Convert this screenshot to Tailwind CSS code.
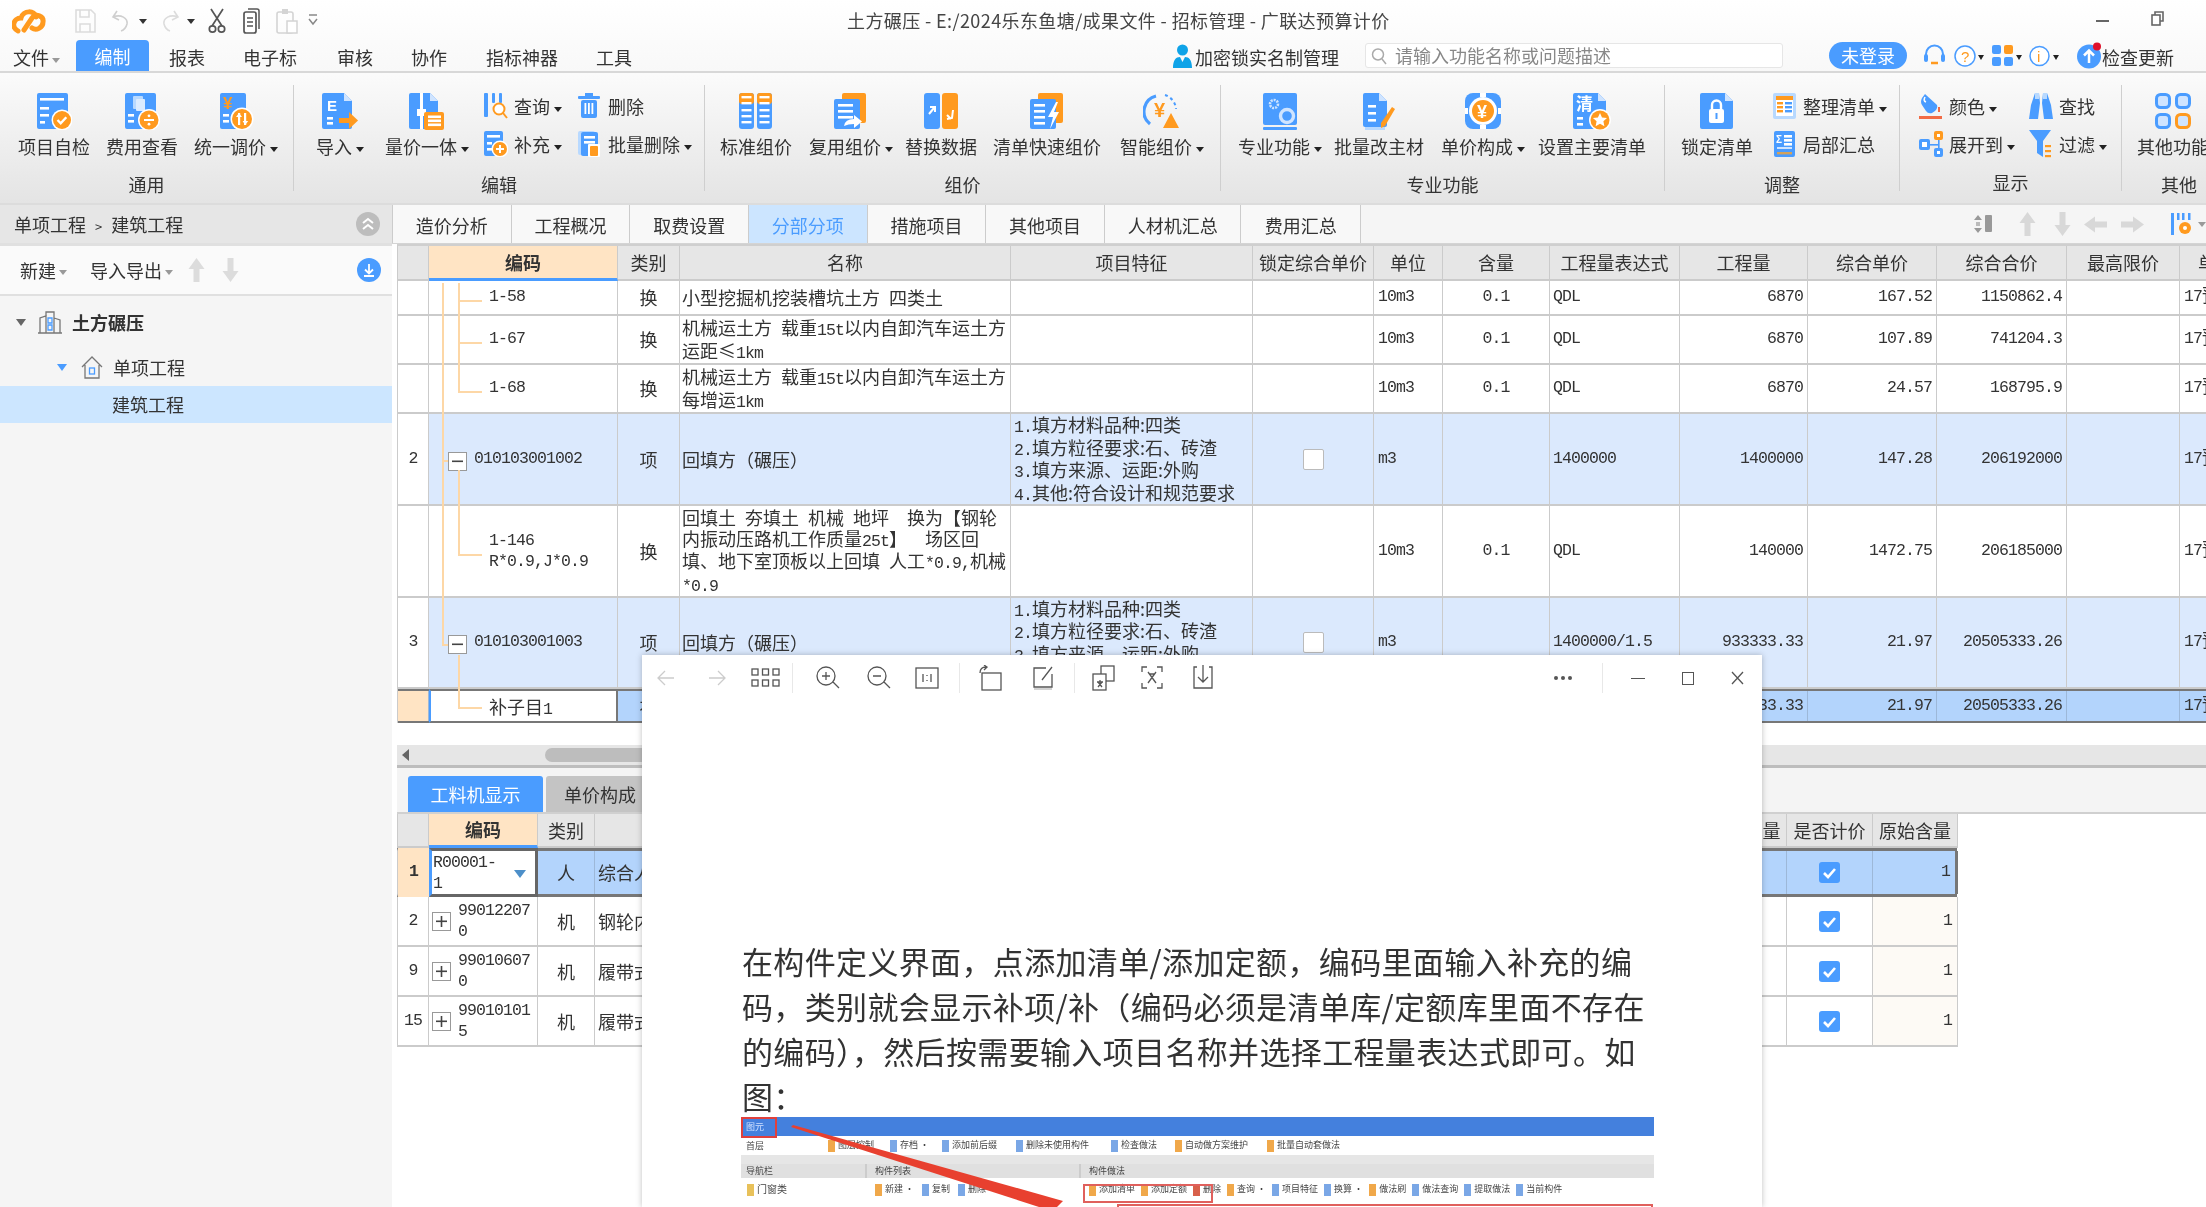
<!DOCTYPE html>
<html lang="zh-CN">
<head>
<meta charset="utf-8">
<title>广联达预算计价</title>
<script src="https://cdn.jsdelivr.net/npm/@tailwindcss/browser@4"></script>
</head>
<body class="bg-white">
<div id="app" class="relative w-[2206px] h-[1207px] overflow-hidden bg-white text-[18px] text-[#333] [font-family:'Noto_Sans_CJK_SC','Liberation_Sans',sans-serif] blur-[0.4px]"></div>
<script>
const BLUE = '#4a9cff', ORG = '#ff9a1f', LT = '#b8d9ff';
const svg = (w, h, body) => `<svg width="${w}" height="${h}" viewBox="0 0 ${w} ${h}" class="block shrink-0">${body}</svg>`;
const r = (x, y, w, h, f = '#fff', rx = 0) => `<rect x="${x}" y="${y}" width="${w}" height="${h}" fill="${f}" rx="${rx}"/>`;
const badge = (cx, cy, rad, inner) => `<circle cx="${cx}" cy="${cy}" r="${rad + 1.5}" fill="#fff"/><circle cx="${cx}" cy="${cy}" r="${rad}" fill="${ORG}"/>${inner}`;
const docPath = (w, h, f = BLUE) => `<path d="M2 0H${w - 8}L${w} 8V${h - 2}Q${w} ${h} ${w - 2} ${h}H2Q0 ${h} 0 ${h - 2}V2Q0 0 2 0Z" fill="${f}"/><path d="M${w - 8} 0V8H${w}Z" fill="#cfe4ff"/>`;
const txt = (x, y, s, t, f = '#fff', w = 700) => `<text x="${x}" y="${y}" font-size="${s}" fill="${f}" font-weight="${w}" font-family="Liberation Sans, Noto Sans CJK SC, sans-serif">${t}</text>`;
const lines = (x, ys, w) => ys.map(y => r(x, y, w, 2.6)).join('');

const icons = {
  xmzj: svg(36, 37, r(1, 0, 31, 36, BLUE, 2) + lines(4, [5], 24) + lines(4, [14, 21], 9) + lines(4, [28], 5) + badge(26, 27, 9, `<path d="M21.5 27l3.2 3.3 5.6-6" stroke="#fff" stroke-width="2.4" fill="none"/>`)),
  fyck: svg(36, 37, r(1, 0, 31, 36, BLUE, 2) + r(9, 3, 10, 13, LT, 1) + r(12, 6, 9, 12, '#dcecff', 1) + lines(4, [21, 27], 6) + badge(25, 27, 9.5, r(20, 26, 10, 2) + `<circle cx="25" cy="22.8" r="1.4" fill="#fff"/><circle cx="25" cy="31.2" r="1.4" fill="#fff"/>`)),
  tytj: svg(36, 37, r(2, 0, 26, 36, BLUE, 2) + txt(5, 16, 17, '¥', ORG, 900) + lines(5, [21, 27], 6) + badge(24, 26, 10, r(20, 20, 2.2, 12) + r(26, 20, 2.2, 12) + `<path d="M18 24l3-4 3 4zM24.6 28l2.6 4 3-4z" fill="#fff"/>`)),
  dr: svg(36, 37, docPath(30, 36) + txt(5, 18, 15, 'E') + lines(5, [24, 29], 6) + r(17, 25, 11, 5, ORG) + `<path d="M27 19l9 8.5-9 8.5z" fill="${ORG}"/>`),
  ljyt: svg(36, 37, docPath(29, 36) + r(11, 0, 3, 36, '#fff') + r(8, 16, 9, 7, '#fff') + r(15, 19, 20, 18, ORG, 2) + lines(19, [22.5, 26.5, 30.5], 13)),
  bzzj: svg(34, 37, r(0, 0, 15, 36, BLUE, 3) + r(18, 0, 15, 36, BLUE, 3) + r(0, 0, 15, 11, ORG, 3) + r(18, 0, 15, 11, ORG, 3) + [3, 9, 16, 22, 28].map(y => r(2.5, y, 10, 2.4) + r(20.5, y, 10, 2.4)).join('')),
  fyzj: svg(34, 37, r(8, 0, 24, 30, ORG, 2) + r(0, 6, 26, 30, BLUE, 2) + lines(4, [11, 17, 23], 15) + `<path d="M10 33q1-7 10-7v-4l8 6.5-8 6.5v-4q-6 0-10 2z" fill="#fff"/>`),
  thsj: svg(34, 37, r(0, 0, 16, 36, BLUE, 3) + r(18, 0, 16, 36, ORG, 3) + `<path d="M5 21l5-6M6 14h5v5M29 17l-1 8-5 1M23 22l4 4" stroke="#fff" stroke-width="2" fill="none"/>`),
  qdks: svg(34, 37, r(8, 0, 25, 30, ORG, 2) + r(0, 6, 26, 30, BLUE, 2) + lines(4, [11, 17, 23, 29], 11) + `<path d="M26 9l-8 15h5l-3 12 9-17h-5l4-10z" fill="#fff"/>`),
  znzj: svg(38, 37, `<path d="M13 3A16 16 0 0 0 7 31" stroke="${BLUE}" stroke-width="3.2" fill="none"/><path d="M22 2A16 16 0 0 1 33 16" stroke="${BLUE}" stroke-width="2" stroke-dasharray="3 3" fill="none"/>` + txt(11, 24, 20, '¥', ORG, 900) + `<path d="M28 20l8 15H20z" fill="${ORG}"/>`),
  zygn: svg(34, 37, r(0, 0, 34, 32, BLUE, 2) + r(0, 34, 34, 3, BLUE, 1) + `<circle cx="11" cy="11" r="4" fill="none" stroke="#cfe4ff" stroke-width="2.6" stroke-dasharray="2 1"/><circle cx="24" cy="23" r="6.5" fill="none" stroke="#cfe4ff" stroke-width="3.4"/>`),
  plgz: svg(32, 37, r(2, 32, 20, 5, LT) + docPath(24, 34) + lines(5, [12, 19, 26], 8) + `<path d="M29 14l3 2-10 17-4 2 0-5z" fill="${ORG}"/>`),
  djgc: svg(36, 37, r(0, 0, 36, 36, BLUE, 8) + `<circle cx="18" cy="18" r="14" fill="#fff"/><circle cx="18" cy="18" r="11" fill="${ORG}"/>` + txt(12, 25, 18, '¥', '#fff', 900) + r(15, 0, 6, 4, '#fff') + r(15, 32, 6, 4, '#fff') + r(0, 15, 3, 6, '#fff') + r(33, 15, 3, 6, '#fff')),
  szzy: svg(38, 37, docPath(33, 36) + txt(3, 17, 17, '清') + lines(4, [24, 30], 6) + badge(27, 27, 9.5, `<path d="M27 20l2 4.5 5 .5-3.6 3.3 1 5-4.4-2.6-4.4 2.6 1-5L19.9 25l5-.5z" fill="#fff"/>`)),
  sdqd: svg(34, 37, docPath(33, 36) + r(9, 16, 15, 14, '#fff', 2) + `<path d="M12 16v-4a4.5 4.5 0 0 1 9 0v4" stroke="#fff" stroke-width="2.4" fill="none"/>` + r(15.5, 20, 2, 6, BLUE)),
  qt: svg(36, 37, [[0, 0, BLUE], [20, 0, BLUE], [0, 20, BLUE], [20, 20, ORG]].map(([x, y, c]) => `<rect x="${x + 1.5}" y="${y + 1.5}" width="13" height="13" rx="4" fill="#cfe4ff" stroke="${c}" stroke-width="3"/>`).join('')),
  cx: svg(24, 26, r(0, 0, 4, 24, BLUE, 1) + r(8, 0, 3, 10, BLUE, 1) + r(15, 0, 3, 10, BLUE, 1) + `<circle cx="15" cy="16" r="5.5" stroke="${ORG}" stroke-width="2" fill="#fff"/><path d="M19 20l4 5" stroke="${ORG}" stroke-width="2"/>`),
  sc: svg(24, 26, r(0, 3, 22, 3, BLUE, 1) + r(7, 0, 8, 3, BLUE) + r(3, 7, 16, 18, BLUE, 2) + r(6.5, 10, 1.8, 11) + r(10, 10, 1.8, 11) + r(13.5, 10, 1.8, 11)),
  bc: svg(24, 26, r(0, 0, 19, 25, BLUE, 2) + lines(3, [4], 13) + lines(3, [11, 17], 5) + badge(16, 18, 7, r(12, 17, 8, 2) + r(15, 14, 2, 8))),
  plsc: svg(24, 26, r(0, 0, 17, 24, LT, 2) + r(3, 1, 17, 24, BLUE, 2) + lines(6, [5, 10], 11) + r(10, 13, 12, 13, '#fff', 1) + r(12, 15, 8, 10, ORG, 1)),
  zlqd: svg(24, 26, r(0, 0, 23, 26, LT, 2) + r(3, 3, 17, 20, '#fff') + r(3, 3, 17, 4, ORG) + [9, 13, 17].map(y => r(4, y, 6, 2.4, ORG) + r(12, y, 7, 2.4, BLUE)).join('')),
  jbhz: svg(24, 26, r(1, 0, 21, 26, BLUE, 2) + txt(3, 12, 10, 'Σ') + lines(11, [4, 8, 12], 8) + r(4, 16, 15, 2, '#cfe4ff') + r(4, 21, 15, 2.4, '#d4a25a')),
  ys: svg(24, 26, `<path d="M6 1l12 11q1 3-2 6l-3 2q-4 1-6-2L3 12Q1 9 3 5z" fill="${BLUE}"/><path d="M6 4q-2 4 1 5" stroke="#fff" stroke-width="1.6" fill="none"/>` + r(0, 23, 23, 3, '#f26b45') + r(19, 14, 2, 5, '#f26b45')),
  cz: svg(24, 26, `<path d="M6 0h4l1 10-2 16H0l2-14zM18 0h-4l-1 10 2 16h9l-2-14z" fill="${BLUE}"/>` + r(6, 0, 4, 6, LT) + r(14, 0, 4, 6, LT)),
  zk: svg(24, 26, r(0, 8, 11, 11, BLUE, 2) + r(3, 11, 5, 5, '#fff') + r(15, 0, 9, 9, ORG, 2) + r(15, 17, 9, 9, BLUE, 2) + r(18, 3, 3, 3, '#fff') + r(18, 20, 3, 3, '#fff') + r(11, 13, 8, 1.6, BLUE) + r(19, 9, 1.6, 8, BLUE)),
  gl: svg(24, 28, `<path d="M0 0h22L14 11v16l-6-4V11z" fill="${BLUE}"/>` + r(16, 15, 6, 2.2, ORG) + r(16, 20, 6, 2.2, ORG) + r(16, 25, 6, 2.2, ORG)),
};

const CARET = '<span class="inline-block ml-[4px] align-middle border-x-[4px] border-x-transparent border-t-[5px] border-t-[#222]"></span>';
const CARET_GRAY = '<span class="inline-block ml-[3px] align-middle border-x-[4px] border-x-transparent border-t-[5px] border-t-[#999]"></span>';

const big = (ic, label, caret, cls = '') => `<div class="flex flex-col items-center ${cls}"><div class="h-[36px] mb-[5px]">${icons[ic]}</div><div class="h-[24px] leading-[24px] whitespace-nowrap">${label}${caret ? CARET : ''}</div></div>`;
const small = (ic, label, caret) => `<div class="flex items-center h-[24px]"><div class="w-[24px] mr-[6px]">${icons[ic]}</div><span class="whitespace-nowrap leading-[24px]">${label}${caret ? CARET : ''}</span></div>`;
const smallCol = (a, b, cls = '') => `<div class="flex flex-col gap-[14px] mt-[1px] ${cls}">${a}${b}</div>`;
const group = (label, width, pad, inner) => `<div class="${width} ${pad} shrink-0 my-[12px] pt-[8px] border-r border-[#cfcfcf] flex flex-col"><div class="flex h-[65px] items-start">${inner}</div><div class="mt-[14px] h-[24px] leading-[24px] text-center -ml-[var(--pad)]">${label}</div></div>`;

const ribbon = `
<div class="flex h-[132px] bg-gradient-to-b from-[#fbfbfb] to-[#e4e4e4] border-b-2 border-[#dcdcdc] overflow-hidden">
  ${group('通用', 'w-[294px]', 'pl-[18px] [--pad:18px]', big('xmzj', '项目自检') + big('fyck', '费用查看', 0, 'ml-[16px]') + big('tytj', '统一调价', 1, 'ml-[16px]'))}
  ${group('编辑', 'w-[411px]', 'pl-[22px] [--pad:22px]', big('dr', '导入', 1) + big('ljyt', '量价一体', 1, 'ml-[21px]') + smallCol(small('cx', '查询', 1), small('bc', '补充', 1), 'ml-[15px] w-[78px]') + smallCol(small('sc', '删除'), small('plsc', '批量删除', 1), 'ml-[16px]'))}
  ${group('组价', 'w-[516px]', 'pl-[15px] [--pad:15px]', big('bzzj', '标准组价') + big('fyzj', '复用组价', 1, 'ml-[17px]') + big('thsj', '替换数据', 0, 'ml-[12px]') + big('qdks', '清单快速组价', 0, 'ml-[16px]') + big('znzj', '智能组价', 1, 'ml-[19px]'))}
  ${group('专业功能', 'w-[444px]', 'pl-[17px] [--pad:17px]', big('zygn', '专业功能', 1) + big('plgz', '批量改主材', 0, 'ml-[12px]') + big('djgc', '单价构成', 1, 'ml-[17px]') + big('szzy', '设置主要清单', 0, 'ml-[13px]'))}
  ${group('调整', 'w-[235px]', 'pl-[16px] [--pad:16px]', big('sdqd', '锁定清单') + smallCol(small('zlqd', '整理清单', 1), small('jbhz', '局部汇总'), 'ml-[20px]'))}
  ${group('显示', 'w-[222px]', 'pl-[19px] [--pad:19px]', smallCol(small('ys', '颜色', 1), small('zk', '展开到', 1), 'w-[94px]') + smallCol(small('cz', '查找'), small('gl', '过滤', 1), 'ml-[16px]'))}
  <div class="flex-1 my-[12px] pt-[8px] pl-[15px]"><div class="h-[65px] whitespace-nowrap">${big('qt', '其他功能', 0, 'w-[72px]')}</div><div class="mt-[14px] h-[24px] leading-[24px] pl-[24px]">其他</div></div>
</div>`;

const quick = `
<div class="flex items-center h-[42px]">
  <div class="w-[847px] flex items-center shrink-0 pl-[12px]">
    ${svg(34, 26, `<path d="M6 23C-1 20 1 10 9 10 11 2 23 2 24 9M12 22l8-12c4-5 12-2 11 4 0 6-7 9-11 6" stroke="${ORG}" stroke-width="5" fill="none" stroke-linecap="round"/>`)}
    <div class="ml-[28px]">${svg(22, 24, `<path d="M2 1h15l4 4v18H2z M6 1v7h9V1 M6 23v-8h10v8" stroke="#dcdcdc" stroke-width="1.6" fill="none"/>`)}</div>
    <div class="ml-[15px]">${svg(19, 24, `<path d="M6 2L2 8l6 3M2 8c8-3 15 1 14 7-1 4-3 6-6 7" stroke="#cfcfcf" stroke-width="1.6" fill="none"/>`)}</div>
    <span class="ml-[9px] border-x-[4px] border-x-transparent border-t-[5px] border-t-[#333]"></span>
    <div class="ml-[14px]">${svg(19, 24, `<path d="M13 2l4 6-6 3M17 8C9 5 2 9 3 15c1 4 3 6 6 7" stroke="#dcdcdc" stroke-width="1.6" fill="none"/>`)}</div>
    <span class="ml-[7px] border-x-[4px] border-x-transparent border-t-[5px] border-t-[#333]"></span>
    <div class="ml-[13px]">${svg(18, 26, `<path d="M3 1l11 17M15 1L4 18" stroke="#555" stroke-width="1.7"/><circle cx="4.5" cy="21" r="3.2" stroke="#555" stroke-width="1.7" fill="none"/><circle cx="13.5" cy="21" r="3.2" stroke="#555" stroke-width="1.7" fill="none"/>`)}</div>
    <div class="ml-[17px]">${svg(17, 26, `<rect x="1" y="4" width="12" height="21" rx="2" stroke="#555" stroke-width="1.7" fill="#fff"/><path d="M5 1h9q2 0 2 2v18" stroke="#555" stroke-width="1.5" fill="none"/><path d="M4 10h6M4 14h6M4 18h6" stroke="#555" stroke-width="1.4"/>`)}</div>
    <div class="ml-[16px]">${svg(22, 26, `<rect x="1" y="4" width="16" height="21" rx="2" stroke="#d4d4d4" stroke-width="1.6" fill="none"/><rect x="6" y="1" width="6" height="5" fill="#d4d4d4"/><rect x="11" y="13" width="10" height="12" stroke="#d4d4d4" stroke-width="1.5" fill="#fff"/>`)}</div>
    <div class="ml-[10px]">${svg(10, 14, `<path d="M1 1h8" stroke="#888" stroke-width="1.5"/><path d="M1 5l4 5 4-5" stroke="#888" stroke-width="1.5" fill="none"/>`)}</div>
  </div>
  <div class="whitespace-nowrap leading-[24px] text-[#444] -mt-[2px] tracking-[0.4px]">土方碾压 - E:/2024乐东鱼塘/成果文件 - 招标管理 - 广联达预算计价</div>
  <div class="ml-[706px] w-[13px] h-[2px] bg-[#666]"></div>
  <div class="ml-[42px] -mt-[6px]">${svg(13, 15, `<rect x="1" y="4" width="8" height="10" stroke="#666" stroke-width="1.6" fill="#fff"/><path d="M4 4V1h8v9H9" stroke="#666" stroke-width="1.6" fill="none"/>`)}</div>
</div>`;

const menu = `
<div class="flex items-end h-[31px] border-b-2 border-[#d8d8d8] whitespace-nowrap">
  <div class="ml-[13px] mb-[1px] leading-[26px] text-[18px]">文件${CARET_GRAY}</div>
  <div class="ml-[16px] w-[73px] h-[31px] leading-[32px] text-center text-white bg-[#4a9cff] rounded-t-[4px]">编制</div>
  <div class="ml-[20px] mb-[1px] leading-[26px]">报表</div>
  <div class="ml-[38px] mb-[1px] leading-[26px]">电子标</div>
  <div class="ml-[40px] mb-[1px] leading-[26px]">审核</div>
  <div class="ml-[38px] mb-[1px] leading-[26px]">协作</div>
  <div class="ml-[39px] mb-[1px] leading-[26px]">指标神器</div>
  <div class="ml-[38px] mb-[1px] leading-[26px]">工具</div>
  <div class="ml-[541px] mb-[3px]">${svg(19, 24, `<circle cx="9.5" cy="6" r="5.5" fill="#0fa3e8"/><path d="M0 24c0-8 3-11 7-11l2.5 5 2.5-5c4 0 7 3 7 11z" fill="#0fa3e8"/>`)}</div>
  <div class="ml-[3px] mb-[1px] leading-[26px]">加密锁实名制管理</div>
  <div class="ml-[26px] mb-[3px] w-[418px] h-[25px] bg-white border border-[#e6e6e6] rounded-[3px] flex items-center pl-[5px] text-[#888]">
    ${svg(16, 18, `<circle cx="7" cy="7.5" r="5.5" stroke="#aaa" stroke-width="1.5" fill="none"/><path d="M11 12l4 5" stroke="#aaa" stroke-width="1.5"/>`)}
    <span class="ml-[8px] leading-[25px]">请输入功能名称或问题描述</span>
  </div>
  <div class="ml-[46px] mb-[2px] w-[78px] h-[27px] rounded-full bg-[#4a9cff] text-white text-center leading-[27px]">未登录</div>
  <div class="ml-[16px] mb-[3px]">${svg(23, 24, `<path d="M3 13V10a8.5 8.5 0 0 1 17 0v3" stroke="${BLUE}" stroke-width="2" fill="none"/><rect x="1" y="10" width="4" height="8" rx="2" fill="${BLUE}"/><rect x="18" y="10" width="4" height="8" rx="2" fill="${BLUE}"/><path d="M8 19h7" stroke="${ORG}" stroke-width="2.5"/>`)}</div>
  <div class="ml-[8px] mb-[3px]">${svg(22, 24, `<circle cx="11" cy="12" r="10" stroke="${BLUE}" stroke-width="1.5" fill="#fff"/>` + txt(7, 18, 15, '?', ORG, 400))}</div>
  <span class="ml-[2px] mb-[11px] border-x-[3.5px] border-x-transparent border-t-[5px] border-t-[#222]"></span>
  <div class="ml-[8px] mb-[3px]">${svg(22, 24, r(0, 1, 9, 9, BLUE, 2) + r(12, 1, 9, 9, ORG, 2) + r(0, 13, 9, 9, BLUE, 2) + r(12, 13, 9, 9, BLUE, 2))}</div>
  <span class="ml-[2px] mb-[11px] border-x-[3.5px] border-x-transparent border-t-[5px] border-t-[#222]"></span>
  <div class="ml-[7px] mb-[3px]">${svg(21, 24, `<circle cx="10.5" cy="12" r="9.5" stroke="${BLUE}" stroke-width="1.5" fill="#fff"/>` + txt(8, 18, 15, 'i', ORG, 400))}</div>
  <span class="ml-[3px] mb-[11px] border-x-[3.5px] border-x-transparent border-t-[5px] border-t-[#222]"></span>
  <div class="ml-[18px] mb-[2px]">${svg(25, 27, `<circle cx="12" cy="14.5" r="12" fill="${BLUE}"/><path d="M12 21v-12M7 13.5l5-5 5 5" stroke="#fff" stroke-width="2.5" fill="none"/><circle cx="20" cy="4.500" r="4" fill="#e0112b"/>`)}</div>
  <div class="mb-[1px] leading-[26px]">检查更新</div>
</div>`;

const leftPanel = `
<div class="w-[392px] shrink-0 h-full bg-[#f5f5f5] flex flex-col">
  <div class="h-[41px] bg-[#e6e6e6] flex items-center pl-[14px] border-b-[3px] border-[#e0e0e0]">
    <span class="flex-1">单项工程&ensp;<span class="text-[13px]">&gt;</span>&ensp;建筑工程</span>
    <div class="mr-[12px] w-[24px] h-[24px] rounded-full bg-[#bdbdbd] flex items-center justify-center">${svg(14, 14, `<path d="M2 6l5-4 5 4M2 12l5-4 5 4" stroke="#fff" stroke-width="2" fill="none"/>`)}</div>
  </div>
  <div class="h-[50px] bg-[#fafafa] border-b-2 border-[#e0e0e0] flex items-center">
    <span class="ml-[20px]">新建${CARET_GRAY}</span>
    <span class="ml-[23px]">导入导出${CARET_GRAY}</span>
    <div class="ml-[15px]">${svg(17, 24, `<path d="M8.5 0l8 11h-5v13h-6V11h-5z" fill="#dcdcdc"/>`)}</div>
    <div class="ml-[17px]">${svg(17, 24, `<path d="M8.5 24l8-11h-5V0h-6v13h-5z" fill="#dcdcdc"/>`)}</div>
    <div class="ml-[118px] w-[24px] h-[24px] rounded-full bg-[#4a9cff] flex items-center justify-center">${svg(14, 14, `<path d="M7 1v9M3 6.5l4 4 4-4M2 13h10" stroke="#fff" stroke-width="1.8" fill="none"/>`)}</div>
  </div>
  <div class="h-[52px] flex items-center">
    <span class="ml-[16px] border-x-[5.5px] border-x-transparent border-t-[7px] border-t-[#666]"></span>
    <div class="ml-[12px]">${svg(24, 24, `<path d="M2 23V8l6-2V23M8 6V2h8v21M16 8l6 2v13M0 23h24" stroke="#777" stroke-width="1.3" fill="none"/><path d="M10 8h4v5h-4zM10 15h4v5h-4z" stroke="${BLUE}" stroke-width="1.3" fill="none"/>`)}</div>
    <span class="ml-[10px] font-bold">土方碾压</span>
  </div>
  <div class="h-[38px] flex items-center">
    <span class="ml-[57px] border-x-[5.5px] border-x-transparent border-t-[7px] border-t-[#4a9cff]"></span>
    <div class="ml-[14px]">${svg(22, 24, `<path d="M1 12L11 2l10 10M4 10v13h14V10" stroke="#777" stroke-width="1.3" fill="none"/><rect x="8.5" y="13" width="5" height="6" stroke="${BLUE}" stroke-width="1.3" fill="none"/>`)}</div>
    <span class="ml-[10px]">单项工程</span>
  </div>
  <div class="h-[37px] bg-[#cce6ff] leading-[37px] pl-[112px]">建筑工程</div>
</div>`;

const tabNames = [['造价分析', 'w-[120px]'], ['工程概况', 'w-[120px]'], ['取费设置', 'w-[120px]'], ['分部分项', 'w-[120px]', 1], ['措施项目', 'w-[120px]'], ['其他项目', 'w-[120px]'], ['人材机汇总', 'w-[138px]'], ['费用汇总', 'w-[121px]']];
const G = '#d8d8d8';
const tabs = `
<div class="h-[39px] flex bg-[#f5f5f5] border-b border-[#d4d4d4] items-stretch">
  ${tabNames.map(([n, w, on]) => `<div class="${w} text-center leading-[40px] border-l border-[#ccc] ${on ? 'bg-[#cce5ff] text-[#4a9cff]' : 'bg-[#f8f8f8]'}">${n}</div>`).join('')}
  <div class="border-l border-[#ccc] flex items-center flex-1 pl-[613px]">
    ${svg(20, 20, `<path d="M4 1l4 5H0zM4 19l4-5H0z" fill="#999"/>` + r(2, 8, 4, 4, '#bbb') + r(11, 1, 7, 17, '#999', 1))}
    <div class="ml-[25px]">${svg(17, 24, `<path d="M8.5 0l8 11h-5v13h-6V11h-5z" fill="${G}"/>`)}</div>
    <div class="ml-[18px]">${svg(17, 24, `<path d="M8.5 24l8-11h-5V0h-6v13h-5z" fill="${G}"/>`)}</div>
    <div class="ml-[13px]">${svg(23, 17, `<path d="M0 8.5l11-8v5h12v6H11v5z" fill="${G}"/>`)}</div>
    <div class="ml-[14px]">${svg(23, 17, `<path d="M23 8.5l-11-8v5H0v6h12v5z" fill="${G}"/>`)}</div>
    <div class="ml-[27px]">${svg(22, 24, r(0, 1, 3, 22, BLUE) + r(6, 1, 2.5, 7, BLUE) + r(11, 1, 2.5, 7, BLUE) + r(17, 1, 2.5, 7, BLUE) + `<circle cx="14" cy="16" r="6" fill="${ORG}"/><circle cx="14" cy="16" r="2" fill="#fff"/>`)}</div>
    <span class="ml-[5px] border-x-[4px] border-x-transparent border-t-[5px] border-t-[#999]"></span>
  </div>
</div>`;

// 主表格
const COLS = 'grid grid-cols-[31px_189px_62px_331px_242px_121px_69px_107px_130px_128px_129px_130px_113px_200px]';
const headNames = ['', '编码', '类别', '名称', '项目特征', '锁定综合单价', '单位', '含量', '工程量表达式', '工程量', '综合单价', '综合合价', '最高限价', '单价'];
const CELL = 'border-r border-b-2 border-[#cbcbcb] overflow-hidden flex items-center';
const MONO = "[font-family:'Liberation_Mono','Noto_Sans_CJK_SC',monospace] text-[16.5px] tracking-[-0.9px]";
const n = s => `<span class="${MONO} leading-none">${s}</span>`;
const box = (sign) => `<span class="inline-flex shrink-0 w-[19px] h-[19px] bg-white border border-[#999] items-center justify-center relative">${svg(11, 11, r(0, 4.5, 11, 1.6, '#444') + (sign === '+' ? r(4.7, 0, 1.6, 11, '#444') : ''))}</span>`;
const feat = `<div class="leading-[21px] text-[18px]">${n('1.')}填方材料品种:四类<br>${n('2.')}填方粒径要求:石、砖渣<br>${n('3.')}填方来源、运距:外购<br>${n('4.')}其他:符合设计和规范要求</div>`;
const lock = '<span class="w-[21px] h-[21px] bg-white border border-[#bbb] rounded-[2px] mx-auto"></span>';

const rows = [
  { h: 'h-[35px]', code: `<span class="${MONO} ml-[60px]">1-58</span>`, t: '换', name: `小型挖掘机挖装槽坑土方&ensp;四类土`, u: '10m3', q: '0.1', e: 'QDL', a: '6870', p: '167.52', s: '1150862.4' },
  { h: 'h-[49px]', code: `<span class="${MONO} ml-[60px]">1-67</span>`, t: '换', name: `机械运土方&ensp;载重${n('15t')}以内自卸汽车运土方<br>运距≤${n('1km')}`, u: '10m3', q: '0.1', e: 'QDL', a: '6870', p: '107.89', s: '741204.3' },
  { h: 'h-[49px]', code: `<span class="${MONO} ml-[60px]">1-68</span>`, t: '换', name: `机械运土方&ensp;载重${n('15t')}以内自卸汽车运土方<br>每增运${n('1km')}`, u: '10m3', q: '0.1', e: 'QDL', a: '6870', p: '24.57', s: '168795.9' },
  { h: 'h-[92px]', hi: 1, no: '2', code: `<span class="ml-[19px]">${box('-')}</span><span class="${MONO} ml-[7px]">010103001002</span>`, t: '项', name: '回填方（碾压）', f: feat, lock: 1, u: 'm3', e: '1400000', a: '1400000', p: '147.28', s: '206192000' },
  { h: 'h-[92px]', code: `<span class="${MONO} ml-[60px] leading-[21px]">1-146<br>R*0.9,J*0.9</span>`, t: '换', name: `回填土&ensp;夯填土&ensp;机械&ensp;地坪&ensp;&ensp;换为【钢轮<br>内振动压路机工作质量${n('25t')}】&ensp;&ensp;场区回<br>填、地下室顶板以上回填&ensp;人工${n('*0.9,')}机械<br>${n('*0.9')}`, u: '10m3', q: '0.1', e: 'QDL', a: '140000', p: '1472.75', s: '206185000' },
  { h: 'h-[91px]', hi: 1, no: '3', code: `<span class="ml-[19px]">${box('-')}</span><span class="${MONO} ml-[7px]">010103001003</span>`, t: '项', name: '回填方（碾压）', f: feat, lock: 1, u: 'm3', e: '1400000/1.5', a: '933333.33', p: '21.97', s: '20505333.26' },
  { h: 'h-[34px]', sel: 1, code: `<span class="ml-[58px] leading-[24px]">补子目${n('1')}</span>`, t: '补', name: '回填方（碾压）', u: 'm3', e: '1400000/1.5', a: '933333.33', p: '21.97', s: '20505333.26' },
];

const rowHtml = (o) => {
  const bg = o.sel ? 'bg-[#b3d4fc] border-y-2 border-[#777]' : o.hi ? 'bg-[#dbe9fd]' : 'bg-white';
  const cellB = o.sel ? 'border-r border-[#9db8d8] overflow-hidden flex items-center' : CELL;
  return `<div class="${COLS} ${o.h} ${bg}">
    <div class="${cellB} justify-center ${o.sel ? 'bg-[#ffe4c4]' : 'bg-white'} ${MONO}">${o.no || ''}</div>
    <div class="${o.sel ? 'bg-white border-2 border-[#777] border-l-[#4a9cff] -my-[2px] flex items-center' : cellB}">${o.code}</div>
    <div class="${cellB} justify-center">${o.t}</div>
    <div class="${cellB} pl-[2px]"><div class="leading-[21px] whitespace-pre">${o.name}</div></div>
    <div class="${cellB} pl-[3px] whitespace-nowrap">${o.f || ''}</div>
    <div class="${cellB}">${o.lock ? lock : ''}</div>
    <div class="${cellB} pl-[4px] ${MONO}">${o.u}</div>
    <div class="${cellB} justify-center ${MONO}">${o.q || ''}</div>
    <div class="${cellB} pl-[3px] ${MONO}">${o.e}</div>
    <div class="${cellB} justify-end pr-[4px] ${MONO}">${o.a}</div>
    <div class="${cellB} justify-end pr-[4px] ${MONO}">${o.p}</div>
    <div class="${cellB} justify-end pr-[4px] ${MONO}">${o.s}</div>
    <div class="${cellB}"></div>
    <div class="${cellB} pl-[4px] ${MONO}">17<span class="text-[18px]">预算书</span></div>
  </div>`;
};

const mainTable = `
<div class="relative ml-[5px] border-t-2 border-[#cfcfcf] border-l border-l-[#cbcbcb]">
  <div class="${COLS} h-[35px] bg-[#e6e6e6]">
    ${headNames.map((h, i) => i === 1
      ? `<div class="bg-[#ffe4c4] border-r border-b-[3px] border-b-[#4a9cff] border-r-[#cbcbcb] flex items-center justify-center font-bold">${h}</div>`
      : i === 13
      ? `<div class="${CELL} pl-[18px] whitespace-nowrap">${h}</div>`
      : `<div class="${CELL} justify-center whitespace-nowrap">${h}</div>`).join('')}
  </div>
  ${rows.map(rowHtml).join('')}
  <!-- 樹狀連線 -->
  <div class="absolute left-[44px] top-[37px] w-[2px] h-[362px] bg-[#fdd7a6]"></div>
  <div class="absolute left-[60px] top-[37px] w-[2px] h-[109px] bg-[#fdd7a6]"></div>
  <div class="absolute left-[60px] top-[54px] w-[24px] h-[2px] bg-[#fdd7a6]"></div>
  <div class="absolute left-[60px] top-[96px] w-[24px] h-[2px] bg-[#fdd7a6]"></div>
  <div class="absolute left-[60px] top-[145px] w-[24px] h-[2px] bg-[#fdd7a6]"></div>
  <div class="absolute left-[60px] top-[224px] w-[2px] h-[85px] bg-[#fdd7a6]"></div>
  <div class="absolute left-[60px] top-[308px] w-[24px] h-[2px] bg-[#fdd7a6]"></div>
  <div class="absolute left-[44px] top-[214px] w-[6px] h-[2px] bg-[#fdd7a6]"></div>
  <div class="absolute left-[44px] top-[398px] w-[6px] h-[2px] bg-[#fdd7a6]"></div>
  <div class="absolute left-[60px] top-[409px] w-[2px] h-[53px] bg-[#fdd7a6]"></div>
  <div class="absolute left-[60px] top-[461px] w-[24px] h-[2px] bg-[#fdd7a6]"></div>
</div>`;

const scroll = `
<div class="ml-[5px] mt-[22px] h-[20px] bg-[#e6e6e6] flex items-center relative">
  <span class="ml-[5px] border-y-[6px] border-y-transparent border-r-[7px] border-r-[#666]"></span>
  <div class="ml-[136px] w-[300px] h-[14px] rounded-full bg-[#bdbdbd]"></div>
</div>
<div class="ml-[5px] h-[3px] bg-[#bdbdbd]"></div>`;

// 工料機表格
const SUB = 'grid grid-cols-[31px_109px_57px_1144px_48px_86px_85px]';
const check = `<span class="w-[21px] h-[21px] rounded-[3px] bg-[#4a9cff] flex items-center justify-center">${svg(15, 13, `<path d="M2 7l4 4 7-8" stroke="#fff" stroke-width="2.6" fill="none"/>`)}</span>`;
const subHead = ['', '编码', '类别', '', '含量', '是否计价', '原始含量'];
const subRows = [
  { no: '2', c: '99012207', d: '0', name: '钢轮内燃压路机' },
  { no: '9', c: '99010607', d: '0', name: '履带式液压挖掘机' },
  { no: '15', c: '99010101', d: '5', name: '履带式推土机' },
];
const subTable = `
<div class="ml-[5px] w-[1560px]">
  <div class="${SUB} h-[34px] bg-[#e6e6e6] border-l border-[#cbcbcb]">
    ${subHead.map((h, i) => i === 1
      ? `<div class="bg-[#ffe4c4] border-r border-b-[3px] border-b-[#4a9cff] border-r-[#cbcbcb] flex items-center justify-center font-bold">${h}</div>`
      : `<div class="${CELL} justify-center whitespace-nowrap">${h}</div>`).join('')}
  </div>
  <div class="${SUB} h-[49px] bg-[#b3d4fc] border-y-[3px] border-[#777] border-l border-l-[#cbcbcb]">
    <div class="bg-[#ffe4c4] -my-[3px] flex items-center justify-center font-bold ${MONO}">1</div>
    <div class="bg-white border-[3px] border-[#666] border-l-[#4a9cff] -my-[3px] flex items-center relative pl-[1px] ${MONO} leading-[21px]"><span>R00001-<br>1</span><span class="absolute right-[9px] top-[19px] border-x-[6px] border-x-transparent border-t-[8px] border-t-[#4d8fc9]"></span></div>
    <div class="border-r border-[#9db8d8] flex items-center justify-center">人</div>
    <div class="border-r border-[#9db8d8] flex items-center pl-[3px]">综合人工</div>
    <div class="border-r border-[#9db8d8]"></div>
    <div class="border-r border-[#9db8d8] flex items-center justify-center">${check}</div>
    <div class="border-r-[3px] border-[#777] flex items-center justify-end pr-[5px] ${MONO}">1</div>
  </div>
  ${subRows.map(o => `<div class="${SUB} h-[50px] bg-white border-l border-[#cbcbcb]">
    <div class="${CELL} justify-center ${MONO}">${o.no}</div>
    <div class="${CELL} pl-[3px]">${box('+')}<span class="ml-[7px] leading-[21px] ${MONO}">${o.c}<br>${o.d}</span></div>
    <div class="${CELL} justify-center">机</div>
    <div class="${CELL} pl-[3px]">${o.name}</div>
    <div class="${CELL}"></div>
    <div class="${CELL} justify-center">${check}</div>
    <div class="${CELL} justify-end pr-[5px] bg-[#fdfaf5] ${MONO}">1</div>
  </div>`).join('')}
</div>`;

const lower = `
<div class="h-[46px] ml-[5px] bg-[#f4f4f4] border-b-2 border-[#d0d0d0] flex items-end pl-[11px]">
  <div class="w-[135px] h-[36px] rounded-t-[3px] bg-[#4a9cff] text-white text-center leading-[36px]">工料机显示</div>
  <div class="ml-[3px] w-[130px] h-[36px] rounded-t-[3px] bg-[#c4c4c4] pl-[18px] leading-[36px]">单价构成</div>
</div>
${subTable}`;

// 彈出的圖片檢視器
const tool = (d, w = 24, h = 24) => svg(w, h, `<g stroke="#555" stroke-width="1.3" fill="none">${d}</g>`);
const chip = (c = '#7aa7e6') => `<span class="inline-block w-[7px] h-[12px] mr-[3px] align-middle" style="background:${c}"></span>`;
const shot = `
<div class="relative ml-[99px] -mt-[1px] w-[913px] h-[90px] overflow-hidden text-[9px] leading-[12px] shrink-0 blur-[0.7px] text-[#444]">
  <div class="h-[19px] bg-[#4480dd] pl-[5px] leading-[19px] text-[#cfe0ff]">图元</div>
  <div class="h-[19px] flex items-center pl-[5px] bg-white whitespace-nowrap">
    <span class="w-[82px]">首层</span>
    <span class="w-[62px]">${chip('#f0a84a')}图层控制</span><span class="w-[52px]">${chip()}存档 ·</span><span class="w-[74px]">${chip()}添加前后缀</span><span class="w-[95px]">${chip()}删除未使用构件</span><span class="w-[64px]">${chip()}检查做法</span><span class="w-[92px]">${chip('#f0a84a')}自动做方案维护</span><span>${chip('#f0a84a')}批量自动套做法</span>
  </div>
  <div class="h-[9px] bg-[#e6e6e6]"></div>
  <div class="h-[14px] bg-[#e0e0e0] flex leading-[14px]">
    <span class="w-[126px] pl-[5px] border-r-2 border-[#ccc]">导航栏</span><span class="w-[214px] pl-[8px] border-r-2 border-[#ccc]">构件列表</span><span class="pl-[8px]">构件做法</span>
  </div>
  <div class="h-[29px] flex bg-white items-start pt-[5px] whitespace-nowrap">
    <span class="w-[126px] pl-[6px] text-[10px]">${chip('#e8c15a')}门窗类</span>
    <span class="w-[214px] pl-[8px] flex gap-[8px]"><span>${chip('#f0a84a')}新建 ·</span><span>${chip()}复制</span><span>${chip()}删除</span></span>
    <span class="pl-[8px] flex gap-[6px]"><span>${chip('#f0a84a')}添加清单</span><span>${chip('#f0a84a')}添加定额</span><span>${chip('#d8604a')}删除</span><span>${chip('#f0a84a')}查询 ·</span><span>${chip()}项目特征</span><span>${chip()}换算 ·</span><span>${chip('#f0a84a')}做法刷</span><span>${chip()}做法查询</span><span>${chip()}提取做法</span><span>${chip()}当前构件</span></span>
  </div>
  <div class="absolute left-[0px] top-[0px] w-[36px] h-[21px] border-2 border-[#e0403c]"></div>
  <div class="absolute left-[342px] top-[67px] w-[130px] h-[19px] border-2 border-[#e0605c]"></div>
  <div class="absolute left-[376px] top-[87px] w-[536px] h-[10px] border-2 border-[#e0605c]"></div>
  <svg class="absolute left-0 top-0" width="913" height="90" viewBox="0 0 913 90"><path d="M52 8L322 84 316 90 298 90 50 10z" fill="#e8402f"/></svg>
</div>`;
const viewer = `
<div class="absolute left-[642px] top-[655px] w-[1120px] h-[552px] bg-white shadow-[0_0_6px_rgba(0,0,0,0.25)] flex flex-col overflow-hidden">
  <div class="h-[46px] shrink-0 flex items-center">
    <div class="ml-[14px]">${svg(20, 20, `<path d="M18 10H2M9 3l-7 7 7 7" stroke="#ccc" stroke-width="1.3" fill="none"/>`)}</div>
    <div class="ml-[31px]">${svg(20, 20, `<path d="M2 10h16M11 3l7 7-7 7" stroke="#ccc" stroke-width="1.3" fill="none"/>`)}</div>
    <div class="ml-[24px]">${tool('<rect x="1" y="3" width="6" height="6"/><rect x="11.5" y="3" width="6" height="6"/><rect x="22" y="3" width="6" height="6"/><rect x="1" y="14" width="6" height="6"/><rect x="11.5" y="14" width="6" height="6"/><rect x="22" y="14" width="6" height="6"/>', 30, 24)}</div>
    <div class="ml-[11px] w-px h-[30px] bg-[#e8e8e8]"></div>
    <div class="ml-[23px]">${tool('<circle cx="10" cy="10" r="9"/><path d="M17 16l6 6M10 6v8M6 10h8"/>')}</div>
    <div class="ml-[27px]">${tool('<circle cx="10" cy="10" r="9"/><path d="M17 16l6 6M6 10h8"/>')}</div>
    <div class="ml-[24px]">${tool('<rect x="1" y="2" width="22" height="20"/><path d="M8 8v8M16 8v8M12 9v1M12 14v1"/>')}</div>
    <div class="ml-[20px] w-px h-[30px] bg-[#e8e8e8]"></div>
    <div class="ml-[18px]">${tool('<rect x="4" y="8" width="19" height="17"/><path d="M2 8C2 4 4 2 8 2M6 0l3 2-3 3"/>', 26, 26)}</div>
    <div class="ml-[27px]">${tool('<path d="M15 3H3v19h18V9M21 2L11 15"/><path d="M3 24h18" stroke="#bbb"/>', 24, 26)}</div>
    <div class="ml-[19px] w-px h-[30px] bg-[#e8e8e8]"></div>
    <div class="ml-[16px]">${tool('<rect x="10" y="1" width="13" height="15"/><rect x="2" y="9" width="13" height="16" fill="#fff"/><path d="M6 17h6M9 15v2M7 22l4-5M7 17l4 5"/>', 26, 26)}</div>
    <div class="ml-[24px]">${tool('<path d="M1 7V2h5M16 2h5v5M1 18v5h5M21 18v5h-5M7 7l8 11M15 7l-8 11M8 9h6"/>', 22, 26)}</div>
    <div class="ml-[30px]">${tool('<path d="M4 2H1v21h18V2h-3M10 0v17M5 12l5 5 5-5"/>', 20, 26)}</div>
    <div class="ml-[341px] flex gap-[3px]"><span class="w-[4px] h-[4px] rounded-full bg-[#555]"></span><span class="w-[4px] h-[4px] rounded-full bg-[#555]"></span><span class="w-[4px] h-[4px] rounded-full bg-[#555]"></span></div>
    <div class="ml-[30px] w-px h-[30px] bg-[#e8e8e8]"></div>
    <div class="ml-[28px] w-[14px] h-px bg-[#555]"></div>
    <div class="ml-[37px] w-[12px] h-[13px] border border-[#555]"></div>
    <div class="ml-[37px]">${tool('<path d="M1 1l11 12M12 1L1 13"/>', 13, 14)}</div>
  </div>
  <div class="ml-[100px] mt-[237px] text-[31px] leading-[45px] tracking-[0.35px] whitespace-nowrap text-[#333] shrink-0">
    在构件定义界面，点添加清单/添加定额，编码里面输入补充的编<br>
    码，类别就会显示补项/补（编码必须是清单库/定额库里面不存在<br>
    的编码），然后按需要输入项目名称并选择工程量表达式即可。如<br>
    图：
  </div>
  ${shot}
</div>`;

document.getElementById('app').innerHTML = `
<div class="h-[73px] bg-gradient-to-b from-white to-[#f8f8f8]">${quick}${menu}</div>
${ribbon}
<div class="flex h-[1002px]">
  ${leftPanel}
  <div class="flex-1 min-w-0 overflow-hidden bg-white">
    ${tabs}
    ${mainTable}
    ${scroll}
    ${lower}
  </div>
</div>
${viewer}`;
</script>
</body>
</html>
